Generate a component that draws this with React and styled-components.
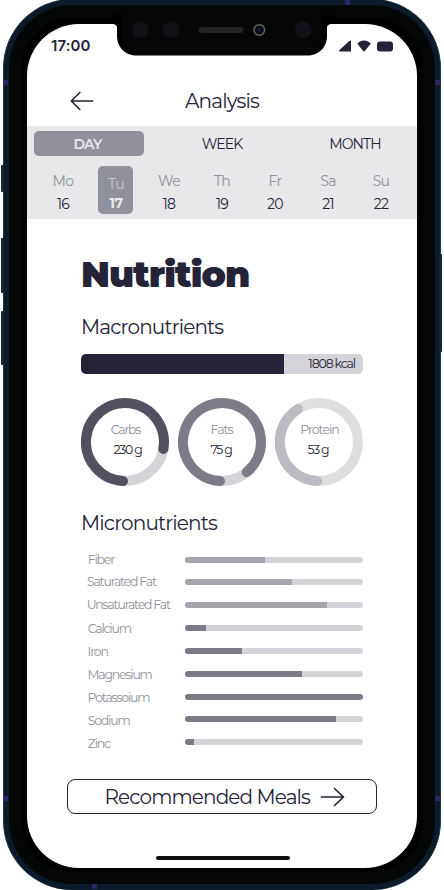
import React from "react";
import styled, { createGlobalStyle } from "styled-components";

const ink = "#252338";
const font = 'Montserrat, Inter, "Open Sans", sans-serif';

const GlobalStyle = createGlobalStyle`
  *, *::before, *::after { box-sizing: border-box; }
  body { margin: 0; background: #fff; }
`;

/* ---------- device ---------- */
const Stage = styled.main`
  position: relative;
  width: 444px;
  height: 890px;
  overflow: hidden;
  background: #fff;
  color: ${ink};
  font-family: ${font};
  letter-spacing: -0.94px;
`;
const Chassis = styled.div`
  width: 438px;
  height: 891px;
  margin: -1px 0 0 2.6px;
  padding: 6px 5px;
  border-radius: 69px;
  background: #0b1b29;
  border: 1px solid #26333f;
  border-width: 0 1px;
`;
const Rim = styled.div`
  height: 879px;
  padding: 12px 12px;
  border-radius: 63px;
  background: #040706;
`;
const Bezel = styled.div`
  height: 855px;
  padding: 7px 6.4px 4px;
  border-radius: 52px;
  background: #000;
`;
const Screen = styled.div`
  display: flex;
  flex-direction: column;
  width: 390px;
  height: 844px;
  border-radius: 52px;
  background: #fff;
  overflow: hidden;
`;
const SideKey = styled.i`
  position: absolute;
  left: ${(p) => p.$x}px;
  top: ${(p) => p.$y}px;
  width: 3px;
  height: ${(p) => p.$h}px;
  border-radius: 1px;
  background: #152634;
`;
const Antenna = styled.i`
  position: absolute;
  left: ${(p) => p.$x}px;
  top: ${(p) => p.$y}px;
  width: 5px;
  height: 5px;
  background: #2b2469;
`;
const NotchArt = styled.svg`
  position: absolute;
  left: 107px;
  top: 15px;
`;

/* ---------- header ---------- */
const StatusBar = styled.div`
  display: flex;
  align-items: center;
  justify-content: space-between;
  height: 44px;
  padding: 0 23px 0 24px;
`;
const Clock = styled.time`
  font: 600 15px/18px Inter, sans-serif;
  letter-spacing: 0.1px;
`;
const StatusIcons = styled.svg`
  display: block;
`;
const TitleBar = styled.header`
  display: grid;
  grid-template-columns: 40px 1fr 40px;
  align-items: center;
  height: 58px;
  padding: 8px 38px 0 41px;
`;
const Title = styled.h1`
  margin: 0;
  padding-right: 3px;
  text-align: center;
  font-size: 20px;
  font-weight: 400;
  line-height: 24px;
  letter-spacing: -0.84px;
`;
const Arrow = styled.svg`
  display: block;
  width: 26px;
  height: 22px;
  fill: none;
  stroke: ${ink};
  stroke-width: 1.7;
  stroke-linecap: round;
  stroke-linejoin: round;
`;

/* ---------- period picker ---------- */
const Picker = styled.section`
  height: 93px;
  padding-top: 5px;
  background: #e8e8ea;
`;
const Tabs = styled.div`
  display: flex;
  justify-content: space-between;
  padding: 0 7px;
`;
const Tab = styled.button`
  width: 110px;
  height: 25px;
  padding: 1px ${(p) => (p.$active ? 3 : 0)}px 0 0;
  border: 0;
  border-radius: 5px;
  background: ${(p) => (p.$active ? "#91919b" : "transparent")};
  color: ${(p) => (p.$active ? "#e8e8ea" : ink)};
  font: ${(p) => (p.$active ? 600 : 400)} 14px/24px ${font};
  letter-spacing: -0.85px;
`;
const Week = styled.div`
  display: grid;
  grid-template-columns: repeat(7, 53px);
  justify-content: center;
  justify-items: center;
  padding-top: 10px;
`;
const Day = styled.div`
  display: flex;
  flex-direction: column;
  align-items: center;
  width: 35px;
  height: 48px;
  padding-top: ${(p) => (p.$active ? 9 : 6)}px;
  gap: ${(p) => (p.$active ? 1 : 4.5)}px;
  border-radius: 5px;
  background: ${(p) => (p.$active ? "#91919b" : "transparent")};
  color: ${(p) => (p.$active ? "#e8e8ea" : ink)};
  font-size: 14px;
  line-height: 18px;
  letter-spacing: -0.7px;
`;
const DayName = styled.span`
  color: ${(p) => (p.$active ? "#c9c9ce" : "#91919b")};
`;
const DayNumber = styled.span`
  font-weight: ${(p) => (p.$active ? 700 : 400)};
`;

/* ---------- nutrition ---------- */
const Content = styled.section`
  padding: 34px 54px 0;
`;
const Heading = styled.h2`
  margin: 0;
  font-size: 36px;
  font-weight: 900;
  line-height: 42px;
`;
const Subheading = styled.h3`
  margin: ${(p) => p.$top}px 0 0;
  font-size: 20px;
  font-weight: 400;
  line-height: 24px;
  letter-spacing: -0.86px;
`;
const Calories = styled.div`
  display: flex;
  height: 20px;
  margin-top: 15px;
  border-radius: 5px;
  overflow: hidden;
  background: #d3d3d8;
`;
const CaloriesFill = styled.div`
  width: 203px;
  background: ${ink};
`;
const CaloriesText = styled.span`
  flex: 1;
  padding-right: 8px;
  text-align: right;
  font-size: 12.5px;
  line-height: 20px;
  letter-spacing: -1.15px;
`;
const Rings = styled.div`
  display: flex;
  justify-content: space-between;
  margin-top: 24px;
`;
const Ring = styled.div`
  display: grid;
  width: 88px;
  height: 88px;
  > * { grid-area: 1 / 1; }
`;
const RingArt = styled.svg`
  fill: none;
  stroke-width: 10;
  stroke-linecap: round;
`;
const RingText = styled.div`
  display: flex;
  flex-direction: column;
  align-items: center;
  gap: 4px;
  padding-top: 24px;
  font-size: 12.5px;
  line-height: 16px;
`;
const RingName = styled.span`
  color: #91919b;
  letter-spacing: ${(p) => p.$track}px;
  margin-left: ${(p) => p.$shift}px;
`;
const RingValue = styled.span`
  letter-spacing: -1.25px;
  margin-left: ${(p) => p.$shift}px;
`;
const Micros = styled.div`
  margin-top: 14px;
`;
const Micro = styled.div`
  display: flex;
  justify-content: space-between;
  height: ${(p) => p.$h}px;
`;
const MicroName = styled.span`
  padding: ${(p) => 3 + p.$drop}px 0 0 ${(p) => p.$indent}px;
  color: #91919b;
  font-size: 12.5px;
  font-weight: 450;
  line-height: 16px;
  letter-spacing: -1.22px;
  white-space: nowrap;
`;
const Track = styled.div`
  width: 178px;
  height: 6px;
  margin-top: 8px;
  border-radius: 3px;
  overflow: hidden;
  background: #d3d3d8;
`;
const Fill = styled.div`
  width: ${(p) => p.$w}px;
  height: 6px;
  background: ${(p) => (p.$light ? "#a5a5ae" : "#7e7b88")};
`;

/* ---------- footer ---------- */
const MealsButton = styled.button`
  display: flex;
  align-items: center;
  gap: 9.5px;
  width: 310px;
  height: 35px;
  margin: 25px 0 0 40px;
  padding: 0 0 0 36.5px;
  border: 1px solid ${ink};
  border-radius: 8px;
  background: #fff;
  color: ${ink};
  font: 400 20px/24px ${font};
  letter-spacing: -0.88px;
  white-space: nowrap;
`;
const HomeIndicator = styled.div`
  width: 134px;
  height: 4px;
  margin: 42px 0 0 129px;
  border-radius: 2px;
  background: #0e0d12;
`;

const tabs = [{ label: "DAY", active: true }, { label: "WEEK" }, { label: "MONTH" }];
const days = [["Mo", 16], ["Tu", 17], ["We", 18], ["Th", 19], ["Fr", 20], ["Sa", 21], ["Su", 22]];
const macros = [
  { name: "Carbs", value: "230 g", color: "#53505f", track: "#d3d3d8", arc: "M42 83A39 39 0 1 1 82.3 51", spacing: -1.25, shift: 1, valueShift: 5 },
  { name: "Fats", value: "75 g", color: "#7e7b88", track: "#d3d3d8", arc: "M42 83A39 39 0 1 1 68.7 74.2", spacing: -1.1, shift: -1, valueShift: -2 },
  { name: "Protein", value: "53 g", color: "#bbbbc1", track: "#dedee0", arc: "M42 83A39 39 0 0 1 23 11", spacing: -1, shift: 1, valueShift: -2 },
];
const micros = [
  { name: "Fiber", w: 80, h: 22, drop: 0, indent: 6.8, light: true },
  { name: "Saturated Fat", w: 107.5, h: 23, drop: 0, indent: 6, light: true },
  { name: "Unsaturated Fat", w: 142.3, h: 23, drop: 0, indent: 5.7, light: true },
  { name: "Calcium", w: 21.5, h: 23, drop: 1, indent: 6.8 },
  { name: "Iron", w: 57, h: 23, drop: 1, indent: 6.6 },
  { name: "Magnesium", w: 117.5, h: 23, drop: 1, indent: 6.6 },
  { name: "Potassoium", w: 178, h: 22, drop: 1, indent: 6.6 },
  { name: "Sodium", w: 151.5, h: 23, drop: 2, indent: 6.8 },
  { name: "Zinc", w: 9, h: 23, drop: 2, indent: 6.8 },
];

function Notch() {
  return (
    <NotchArt width="230" height="42" viewBox="107 15 230 42">
      <path fill="#000" d="M112 24V15H332V24C329 24 327 25 327 28V36C327 48 318 55.5 307 55.5H137C126 55.5 117 48 117 36V28C117 25 115 24 112 24Z" />
      <path fill="#040706" d="M122 15H322V36C322 47 314 51 307 51H137C130 51 122 47 122 36Z" />
      <g fill="#101017">
        <circle cx="140.3" cy="30" r="8.5" />
        <circle cx="171.3" cy="30" r="8.5" />
        <circle cx="303" cy="30" r="8.5" />
      </g>
      <rect x="198.5" y="27" width="45" height="6" rx="3" fill="#222" />
      <circle cx="259.3" cy="30" r="5.3" fill="#090a12" stroke="#66666a" strokeWidth="1.4" />
      <circle cx="259.3" cy="30" r="1.7" fill="#101a48" />
    </NotchArt>
  );
}

export default function App() {
  return (
    <Stage>
      <GlobalStyle />
      <SideKey $x={1} $y={165} $h={27} />
      <SideKey $x={1} $y={238} $h={55} />
      <SideKey $x={1} $y={311} $h={54} />
      <SideKey $x={439.3} $y={254} $h={98} />
      <Chassis>
        <Rim>
          <Bezel>
            <Screen>
              <StatusBar>
                <Clock>17:00</Clock>
                <StatusIcons width="56" height="12" viewBox="338 39.5 56 12" fill={ink}>
                  <path d="M351 40.2V51H340Q338.300 51 339.500 49.600L349 40.800Q350.500 39.500 351 40.200Z" />
                  <path d="M357.300 43.300C361 39 367 39 370.800 43.300L365 50.200Q364 51.600 363 50.200Z" />
                  <rect x="377" y="41" width="16" height="10" rx="3" />
                </StatusIcons>
              </StatusBar>
              <TitleBar>
                <Arrow viewBox="67 90 26 22">
                  <path d="M92.300 101H71M79.500 92.500L71 101L79.500 109.500" transform="translate(-.7 0)" />
                </Arrow>
                <Title>Analysis</Title>
              </TitleBar>
              <Picker>
                <Tabs>
                  {tabs.map((t) => (
                    <Tab key={t.label} $active={t.active}>{t.label}</Tab>
                  ))}
                </Tabs>
                <Week>
                  {days.map(([name, number]) => (
                    <Day key={name} $active={number === 17}>
                      <DayName $active={number === 17}>{name}</DayName>
                      <DayNumber $active={number === 17}>{number}</DayNumber>
                    </Day>
                  ))}
                </Week>
              </Picker>
              <Content>
                <Heading>Nutrition</Heading>
                <Subheading $top={20}>Macronutrients</Subheading>
                <Calories>
                  <CaloriesFill />
                  <CaloriesText>1808 kcal</CaloriesText>
                </Calories>
                <Rings>
                  {macros.map((m) => (
                    <Ring key={m.name}>
                      <RingArt viewBox="0 0 88 88">
                        <circle cx="44" cy="44" r="39" stroke={m.track} />
                        <path d={m.arc} stroke={m.color} />
                      </RingArt>
                      <RingText>
                        <RingName $track={m.spacing} $shift={m.shift}>{m.name}</RingName>
                        <RingValue $shift={m.valueShift}>{m.value}</RingValue>
                      </RingText>
                    </Ring>
                  ))}
                </Rings>
                <Subheading $top={25}>Micronutrients</Subheading>
                <Micros>
                  {micros.map((m) => (
                    <Micro key={m.name} $h={m.h}>
                      <MicroName $drop={m.drop} $indent={m.indent}>{m.name}</MicroName>
                      <Track><Fill $w={m.w} $light={m.light} /></Track>
                    </Micro>
                  ))}
                </Micros>
              </Content>
              <MealsButton>
                Recommended Meals
                <Arrow viewBox="320 786 26 22">
                  <path d="M321.500 797H343.500M334.500 788.500L343.500 797L334.500 805.500" />
                </Arrow>
              </MealsButton>
              <HomeIndicator />
            </Screen>
          </Bezel>
        </Rim>
      </Chassis>
      <Antenna $x={3} $y={80} />
      <Antenna $x={435} $y={80} />
      <Antenna $x={345} $y={0} />
      <Antenna $x={3} $y={796} />
      <Antenna $x={435} $y={796} />
      <Antenna $x={92} $y={884} />
      <Notch />
    </Stage>
  );
}
